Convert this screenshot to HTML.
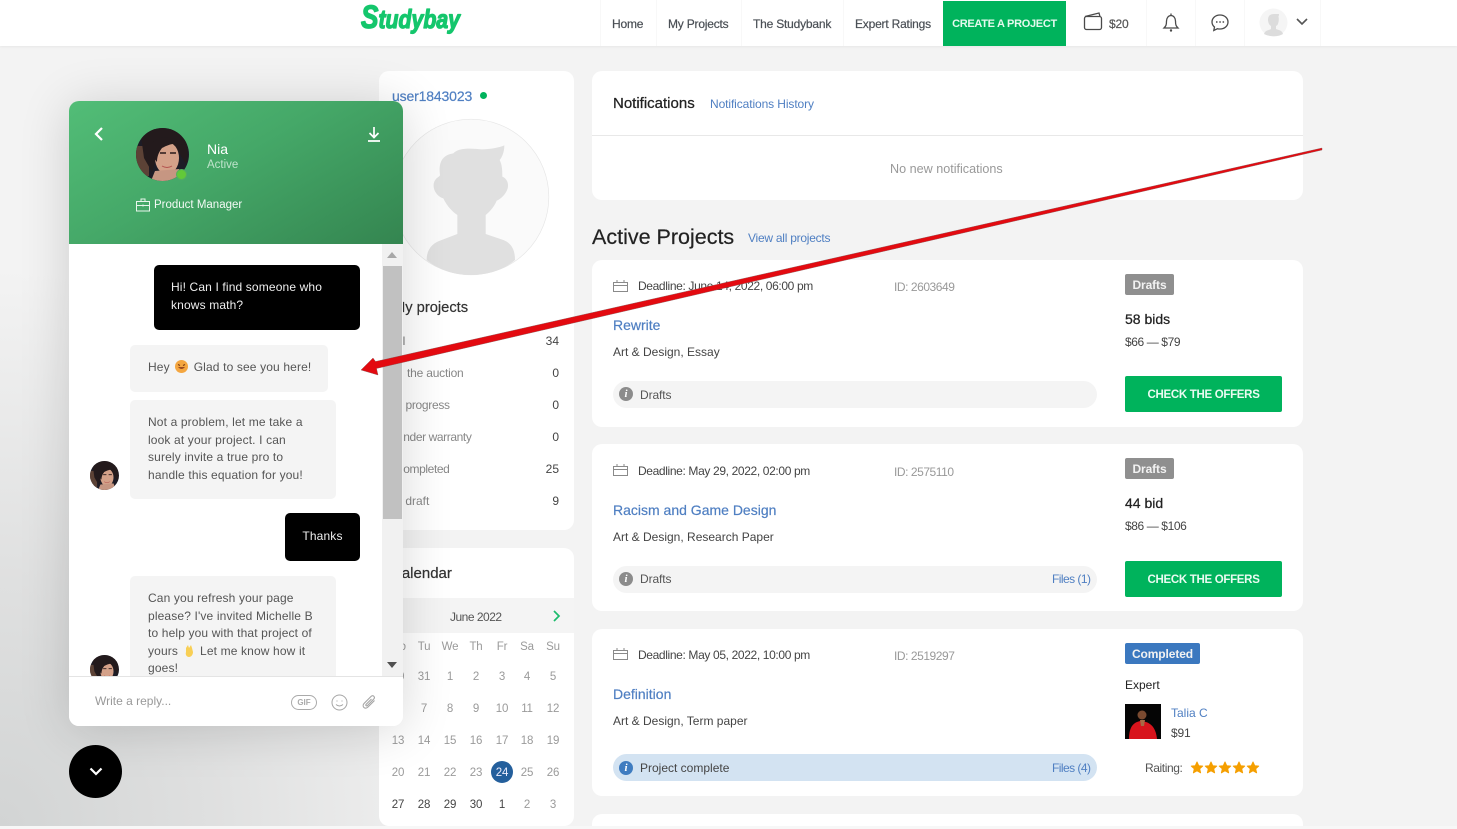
<!DOCTYPE html>
<html style="overflow:hidden;height:829px"><head><meta charset="utf-8"><title>Studybay</title>
<style>
html,body{margin:0;padding:0}
body{width:1457px;height:829px;overflow:hidden;background:#f3f3f3;font-family:"Liberation Sans",sans-serif;font-size:12px;color:#444}
#root{position:absolute;left:0;top:0;width:1457px;height:829px;overflow:hidden;background:#f3f3f3}
.t{position:absolute;white-space:nowrap;line-height:16px}
.box{position:absolute;box-sizing:border-box}
.card{position:absolute;background:#fff;border-radius:10px;box-sizing:border-box}
.blue{color:#4f7fc2}
.nav{font-size:12px;color:#4a4f55;top:16px;letter-spacing:-.2px;-webkit-text-stroke:.2px #4a4f55}
.v{position:absolute;top:0;width:1px;height:46px;background:#f8f8f8}
.btn{position:absolute;left:1125px;width:157px;height:36px;background:#00b35c;border-radius:2px;color:#e9fbf1;font-weight:700;font-size:11.5px;letter-spacing:-.3px;line-height:38px;text-align:center}
.tag{position:absolute;left:1125px;height:21px;line-height:23px;border-radius:2px;color:#f2f2f2;font-weight:700;font-size:12px;letter-spacing:-.1px;text-align:center}
.pill{position:absolute;left:613px;width:484px;height:27px;border-radius:14px;background:#f4f4f4}
.i{position:absolute;width:14px;height:14px;border-radius:50%;background:#8c8c8c;color:#fff;font:italic 700 11px/14px "Liberation Serif",serif;text-align:center}
.bub{position:absolute;box-sizing:border-box;font-size:12px;line-height:17.5px;border-radius:5px;letter-spacing:.14px}
.g{background:#f4f4f4;color:#555;padding:14px 0 0 18px}
.k{background:#000;color:#eee}
.cal{position:absolute;width:26px;text-align:center;line-height:16px;font-size:11.5px;color:#9a9a9a;letter-spacing:-.2px;transform:translateY(1px)}
.d{color:#444}
.dl{letter-spacing:-.36px;color:#444}
.id{letter-spacing:-.45px;color:#999}
.pr{letter-spacing:-.4px;color:#444}
.fl{letter-spacing:-.55px}
.h2{font-size:15px;color:#333;-webkit-text-stroke:.2px #333}
</style></head><body><div id="root">

<!-- ambient shadow of the chat -->
<div class="box" style="left:0;top:46px;width:700px;height:783px;background:radial-gradient(ellipse 480px 560px at 0 100%,#d2d4d4 0,rgba(215,216,216,.7) 45%,rgba(243,243,243,0) 100%)"></div>

<!-- header -->
<div class="box" style="left:0;top:0;width:1457px;height:46px;background:#fff;box-shadow:0 1px 2px rgba(0,0,0,.05)"></div>
<div class="v" style="left:600px"></div><div class="v" style="left:656px"></div><div class="v" style="left:741px"></div><div class="v" style="left:843px"></div><div class="v" style="left:1146px"></div><div class="v" style="left:1195px"></div><div class="v" style="left:1244px"></div><div class="v" style="left:1320px"></div>
<svg class="box" style="left:355px;top:0" width="115" height="40"><text x="6" y="28" font-family="Liberation Sans,sans-serif" font-style="italic" font-weight="700" font-size="26" textLength="99" lengthAdjust="spacingAndGlyphs" fill="#14c66c" stroke="#14c66c" stroke-width="1.300" stroke-linejoin="round"><tspan font-size="32">S</tspan>tudybay</text></svg>
<div class="t nav" style="left:612px">Home</div>
<div class="t nav" style="left:668px">My Projects</div>
<div class="t nav" style="left:753px">The Studybank</div>
<div class="t nav" style="left:855px">Expert Ratings</div>
<div class="box" style="left:943px;top:1px;width:123px;height:45px;background:#00b35c;color:#e4f9ee;font-weight:700;font-size:11px;letter-spacing:-.3px;line-height:46px;text-align:center">CREATE A PROJECT</div>
<svg class="box" style="left:1080px;top:10px" width="26" height="24" fill="none" stroke="#4a4a4a" stroke-width="1.3"><rect x="4.500" y="6.500" width="17" height="13" rx="2"/><path d="M5 6.500 19 3l1 3.500"/></svg>
<div class="t" style="left:1109px;top:16px;color:#555;letter-spacing:-.2px;-webkit-text-stroke:.2px #555">$20</div>
<svg class="box" style="left:1160px;top:11px" width="22" height="22" fill="none" stroke="#4a4a4a" stroke-width="1.3"><path d="M4 17h14c-2-2-2.500-3-2.500-7 0-3-2-5.500-4.500-5.500S6.500 7 6.500 10c0 4-.5 5-2.500 7zM11 2.500v2"/><circle cx="11" cy="19.500" r="1.200" fill="#4a4a4a" stroke="none"/></svg>
<svg class="box" style="left:1209px;top:12px" width="22" height="22" fill="none" stroke="#4a4a4a" stroke-width="1.300"><path d="M11 3c-4.500 0-8 3-8 7 0 2 1 3.800 2.500 5l-.7 3.500 3.700-1.800c.8.200 1.600.300 2.500.300 4.500 0 8-3 8-7s-3.500-7-8-7z"/><path d="M7 10h1.500M10.300 10h1.500M13.600 10h1.500" stroke-width="1.500"/></svg>
<svg class="box" style="left:1259px;top:8px" width="29" height="29" viewBox="0 0 29 29"><circle cx="14.500" cy="14.500" r="14" fill="#f5f5f5"/><path d="M5 26c1-4 6-4 7-5v-3c-2-1-3-4-3-6 0-4 2-6 6-6 2 0 4 0 5 0 0 2-.5 2-.5 3 .5 1 .5 5-1 8l-1.500 1v3c2 1 6 1 7 5-5 3-13 3-19 0z" fill="#dcdcdc"/></svg>
<svg class="box" style="left:1295px;top:17px" width="14" height="10" fill="none" stroke="#555" stroke-width="1.600"><path d="M2 2l5 5 5-5"/></svg>

<!-- sidebar -->
<div class="card" style="left:379px;top:71px;width:195px;height:459px"></div>
<div class="t blue" style="left:392px;top:88px;font-size:14px;letter-spacing:-.15px;-webkit-text-stroke:.2px #4f7fc2">user1843023</div>
<div class="box" style="left:480px;top:92px;width:7px;height:7px;border-radius:50%;background:#00b35c"></div>
<svg class="box" style="left:375px;top:60px" width="210" height="230" viewBox="0 0 630 690"><circle cx="288" cy="411" r="233.500" fill="#fafafa" stroke="#e6e6e6" stroke-width="2"/><path fill="#e0e0e0" d="M155 600C155 565 175 548 200 540L247 522V465C225 450 212 430 205 415 185 410 170 385 178 365 183 352 195 350 195 345 190 310 200 285 235 280 250 262 290 265 320 268 345 268 375 262 388 256 388 275 382 290 374 300 382 315 382 335 382 350 395 355 402 370 398 385 392 405 375 418 365 422 358 440 345 455 332 465V522L385 540C410 550 420 570 420 600 385 630 340 645 285 645 235 645 190 628 155 600Z"/></svg>
<div class="t h2" style="left:393px;top:300px;font-size:14.700px">My projects</div>
<div class="t" style="left:392px;top:333px;color:#777">All</div><div class="t" style="right:898px;top:333px;color:#444">34</div>
<div class="t" style="left:407px;top:365px;color:#888;letter-spacing:-.2px">the auction</div><div class="t" style="right:898px;top:365px;color:#444">0</div>
<div class="t" style="left:393px;top:397px;color:#888;letter-spacing:-.3px">In progress</div><div class="t" style="right:898px;top:397px;color:#444">0</div>
<div class="t" style="left:395px;top:429px;color:#888;letter-spacing:-.4px">Under warranty</div><div class="t" style="right:898px;top:429px;color:#444">0</div>
<div class="t" style="left:395px;top:461px;color:#888;letter-spacing:-.4px">Completed</div><div class="t" style="right:898px;top:461px;color:#444">25</div>
<div class="t" style="left:392px;top:493px;color:#888">In draft</div><div class="t" style="right:898px;top:493px;color:#444">9</div>

<!-- calendar -->
<div class="card" style="left:379px;top:548px;width:195px;height:278px"></div>
<div class="t h2" style="left:391px;top:566px">Calendar</div>
<div class="box" style="left:379px;top:598px;width:195px;height:35px;background:#f4f4f4"></div>
<div class="t" style="left:450px;top:609px;color:#555;letter-spacing:-.5px">June 2022</div>
<svg class="box" style="left:551px;top:609px" width="12" height="14" fill="none" stroke="#1bbb6c" stroke-width="1.700"><path d="M3 2l5 5-5 5"/></svg>
<div class="cal" style="left:385px;top:638px">Mo</div><div class="cal" style="left:411px;top:638px">Tu</div><div class="cal" style="left:437px;top:638px">We</div><div class="cal" style="left:463px;top:638px">Th</div><div class="cal" style="left:489px;top:638px">Fr</div><div class="cal" style="left:514px;top:638px">Sa</div><div class="cal" style="left:540px;top:638px">Su</div>
<div class="cal" style="left:385px;top:668px">30</div><div class="cal" style="left:411px;top:668px">31</div><div class="cal" style="left:437px;top:668px">1</div><div class="cal" style="left:463px;top:668px">2</div><div class="cal" style="left:489px;top:668px">3</div><div class="cal" style="left:514px;top:668px">4</div><div class="cal" style="left:540px;top:668px">5</div>
<div class="cal" style="left:385px;top:700px">6</div><div class="cal" style="left:411px;top:700px">7</div><div class="cal" style="left:437px;top:700px">8</div><div class="cal" style="left:463px;top:700px">9</div><div class="cal" style="left:489px;top:700px">10</div><div class="cal" style="left:514px;top:700px">11</div><div class="cal" style="left:540px;top:700px">12</div>
<div class="cal" style="left:385px;top:732px">13</div><div class="cal" style="left:411px;top:732px">14</div><div class="cal" style="left:437px;top:732px">15</div><div class="cal" style="left:463px;top:732px">16</div><div class="cal" style="left:489px;top:732px">17</div><div class="cal" style="left:514px;top:732px">18</div><div class="cal" style="left:540px;top:732px">19</div>
<div class="cal" style="left:385px;top:764px">20</div><div class="cal" style="left:411px;top:764px">21</div><div class="cal" style="left:437px;top:764px">22</div><div class="cal" style="left:463px;top:764px">23</div>
<div class="box" style="left:491px;top:761px;width:22px;height:22px;border-radius:50%;background:#245f9c"></div>
<div class="cal" style="left:489px;top:764px;color:#eef">24</div><div class="cal" style="left:514px;top:764px">25</div><div class="cal" style="left:540px;top:764px">26</div>
<div class="cal d" style="left:385px;top:796px">27</div><div class="cal d" style="left:411px;top:796px">28</div><div class="cal d" style="left:437px;top:796px">29</div><div class="cal d" style="left:463px;top:796px">30</div><div class="cal d" style="left:489px;top:796px">1</div><div class="cal" style="left:514px;top:796px">2</div><div class="cal" style="left:540px;top:796px">3</div>

<!-- notifications -->
<div class="card" style="left:592px;top:71px;width:711px;height:129px"></div>
<div class="t" style="left:613px;top:96px;font-size:15px;color:#222;-webkit-text-stroke:.25px #222">Notifications</div>
<div class="t blue" style="left:710px;top:96px;letter-spacing:-.1px">Notifications History</div>
<div class="box" style="left:592px;top:135px;width:711px;height:1px;background:#e8e8e8"></div>
<div class="t" style="left:890px;top:161px;font-size:12.600px;color:#999">No new notifications</div>

<div class="t" style="left:592px;top:225px;font-size:21.500px;line-height:24px;color:#222;-webkit-text-stroke:.2px #222">Active Projects</div>
<div class="t blue" style="left:748px;top:230px;letter-spacing:-.25px">View all projects</div>

<!-- project 1 -->
<div class="card" style="left:592px;top:260px;width:711px;height:167px"></div>
<svg class="box" style="left:613px;top:279px" width="15" height="14" fill="none" stroke="#8a8a8a"><path d="M.5 3.500h14v9H.5zM.5 6.500h14M4 1v3M11 1v3"/></svg>
<div class="t dl" style="left:638px;top:278px">Deadline: June 14, 2022, 06:00 pm</div>
<div class="t id" style="left:894px;top:279px">ID: 2603649</div>
<div class="t blue" style="left:613px;top:317px;font-size:14px;-webkit-text-stroke:.2px #4f7fc2">Rewrite</div>
<div class="t" style="left:613px;top:344px;color:#444">Art &amp; Design, Essay</div>
<div class="pill" style="top:381px"></div><div class="i" style="left:619px;top:387px">i</div>
<div class="t" style="left:640px;top:387px;color:#555;letter-spacing:-.1px">Drafts</div>
<div class="tag" style="top:274px;width:49px;background:#8f8f8f">Drafts</div>
<div class="t" style="left:1125px;top:311px;font-size:14px;color:#222;-webkit-text-stroke:.25px #222">58 bids</div>
<div class="t pr" style="left:1125px;top:334px">$66 — $79</div>
<div class="btn" style="top:376px">CHECK THE OFFERS</div>

<!-- project 2 -->
<div class="card" style="left:592px;top:444px;width:711px;height:167px"></div>
<svg class="box" style="left:613px;top:463px" width="15" height="14" fill="none" stroke="#8a8a8a"><path d="M.5 3.500h14v9H.5zM.5 6.500h14M4 1v3M11 1v3"/></svg>
<div class="t dl" style="left:638px;top:463px">Deadline: May 29, 2022, 02:00 pm</div>
<div class="t id" style="left:894px;top:464px">ID: 2575110</div>
<div class="t blue" style="left:613px;top:502px;font-size:14px;-webkit-text-stroke:.2px #4f7fc2">Racism and Game Design</div>
<div class="t" style="left:613px;top:529px;color:#444">Art &amp; Design, Research Paper</div>
<div class="pill" style="top:566px"></div><div class="i" style="left:619px;top:572px">i</div>
<div class="t" style="left:640px;top:571px;color:#555;letter-spacing:-.1px">Drafts</div>
<div class="t blue fl" style="left:1052px;top:571px">Files (1)</div>
<div class="tag" style="top:458px;width:49px;background:#8f8f8f">Drafts</div>
<div class="t" style="left:1125px;top:495px;font-size:14px;color:#222;-webkit-text-stroke:.25px #222">44 bid</div>
<div class="t pr" style="left:1125px;top:518px">$86 — $106</div>
<div class="btn" style="top:561px">CHECK THE OFFERS</div>

<!-- project 3 -->
<div class="card" style="left:592px;top:629px;width:711px;height:167px"></div>
<svg class="box" style="left:613px;top:647px" width="15" height="14" fill="none" stroke="#8a8a8a"><path d="M.5 3.500h14v9H.5zM.5 6.500h14M4 1v3M11 1v3"/></svg>
<div class="t dl" style="left:638px;top:647px">Deadline: May 05, 2022, 10:00 pm</div>
<div class="t id" style="left:894px;top:648px">ID: 2519297</div>
<div class="t blue" style="left:613px;top:686px;font-size:14px;-webkit-text-stroke:.2px #4f7fc2">Definition</div>
<div class="t" style="left:613px;top:713px;color:#444">Art &amp; Design, Term paper</div>
<div class="pill" style="top:754px;background:#d3e3f2"></div><div class="i" style="left:619px;top:761px;background:#3f7cc0">i</div>
<div class="t" style="left:640px;top:760px;color:#444">Project complete</div>
<div class="t blue fl" style="left:1052px;top:760px">Files (4)</div>
<div class="tag" style="top:643px;width:75px;background:#3b78bf">Completed</div>
<div class="t" style="left:1125px;top:677px;color:#222">Expert</div>
<svg class="box" style="left:1125px;top:704px" width="36" height="35"><rect width="36" height="35" fill="#050505"/><path d="M4 35c0-10 3-15 8-17l3-1 6 1c6 2 10 7 11 17z" fill="#d8141c"/><circle cx="17" cy="11" r="4.500" fill="#7a4a30"/><path d="M15 16h5l-1 6h-3z" fill="#a86a45"/></svg>
<div class="t blue" style="left:1171px;top:705px">Talia C</div>
<div class="t" style="left:1171px;top:725px;color:#444;letter-spacing:-.2px">$91</div>
<div class="t" style="left:1145px;top:760px;color:#555;letter-spacing:-.4px">Raiting:</div>
<svg class="box" style="left:1190px;top:760px" width="72" height="16" fill="#f59f00" stroke="#f59f00" stroke-linejoin="round"><path id="s" d="M7 2l1.700 3.700 4 .4-3 2.700.9 4-3.600-2.100-3.600 2.100.9-4-3-2.700 4-.4z"/><use href="#s" x="14"/><use href="#s" x="28"/><use href="#s" x="42"/><use href="#s" x="56"/></svg>

<!-- project 4 stub -->
<div class="card" style="left:592px;top:814px;width:711px;height:15px;border-radius:10px 10px 0 0"></div>
<div class="box" style="left:0;top:826px;width:1457px;height:3px;background:#f7f7f7"></div>

<!-- chat -->
<div class="box" style="left:69px;top:101px;width:334px;height:625px;background:#fff;border-radius:10px;overflow:hidden;box-shadow:0 4px 50px rgba(0,0,0,.16)">
  <div class="box" style="left:0;top:0;width:334px;height:143px;background:linear-gradient(150deg,#52bd77 0,#45a868 45%,#348550 100%)"></div>
  <svg class="box" style="left:23px;top:25px" width="14" height="16" fill="none" stroke="#fff" stroke-width="2.200"><path d="M10 2L4 8l6 6"/></svg>
  <svg class="box" style="left:297px;top:25px" width="16" height="17" fill="none" stroke="#fff" stroke-width="1.700"><path d="M8 1v10M3.500 7L8 11.500 12.500 7M2 15h12"/></svg>
  <svg class="box" style="left:67px;top:27px" width="53" height="53" viewBox="0 0 53 53"><defs><clipPath id="cp"><circle cx="26.500" cy="26.500" r="26.500"/></clipPath><g id="face" clip-path="url(#cp)"><rect width="53" height="53" fill="#1d1c26"/><rect x="0" y="18" width="13" height="30" fill="#5c4236"/><path d="M5 8C15-2 38-3 48 8c4 8 5 20 2 28L40 20 22 24l-6 20L8 30z" fill="#231a1c"/><ellipse cx="31" cy="30" rx="12" ry="16" fill="#d4a189"/><path d="M19 43l24-2 4 12H15z" fill="#c69682"/><path d="M26 38q5 3 10 0-5 3-10 0z" fill="#b3524e" stroke="#b3524e"/><path d="M24 25h6M34 25h6" stroke="#2a1b1b" stroke-width="1.500"/><path d="M16 15c8-8 24-8 30 2-8-3-14 0-20 3-3 4-5 8-5 14l-5-6z" fill="#231a1c"/></g></defs><use href="#face"/></svg>
  <div class="box" style="left:107px;top:68px;width:11px;height:11px;border-radius:50%;background:#62c939;border:1px solid #54ad60"></div>
  <div class="t" style="left:138px;top:40px;font-size:14px;color:#fff">Nia</div>
  <div class="t" style="left:138px;top:56px;font-size:11.500px;color:#bfe3cb">Active</div>
  <svg class="box" style="left:67px;top:97px" width="15" height="14" fill="none" stroke="#e8f5ec"><path d="M.5 3.500h13v9.500H.5zM.5 7.500h13M5 3.500V1h4v2.500M7 6.500v2"/></svg>
  <div class="t" style="left:85px;top:96px;font-size:11.500px;color:#f3faf5">Product Manager</div>

  <div class="box" style="left:313px;top:143px;width:21px;height:432px;background:#f1f1f1"></div>
  <div class="box" style="left:314px;top:165px;width:19px;height:253px;background:#c1c1c1"></div>
  <div class="box" style="left:318px;top:151px;border:5px solid transparent;border-top:0;border-bottom:6px solid #a8a8a8"></div>
  <div class="box" style="left:318px;top:561px;border:5px solid transparent;border-bottom:0;border-top:6px solid #505050"></div>

  <div class="bub k" style="left:85px;top:164px;width:206px;height:65px;padding:14px 0 0 17px">Hi! Can I find someone who<br>knows math?</div>
  <div class="bub g" style="left:61px;top:244px;width:198px;height:47px">Hey <svg width="13" height="13" style="vertical-align:-2px;margin:0 2px"><circle cx="6.500" cy="6.500" r="6.500" fill="#f4a640"/><path d="M3 7q3.500 4 7 0" fill="#9a4a20"/><path d="M3 4.500l2 1M10 4.500l-2 1" stroke="#7a3a10"/></svg> Glad to see you here!</div>
  <div class="bub g" style="left:61px;top:299px;width:206px;height:99px">Not a problem, let me take a<br>look at your project. I can<br>surely invite a true pro to<br>handle this equation for you!</div>
  <svg class="box" style="left:21px;top:360px" width="29" height="29" viewBox="0 0 53 53"><use href="#face"/></svg>
  <div class="bub k" style="left:216px;top:412px;width:75px;height:48px;text-align:center;line-height:46px">Thanks</div>
  <div class="bub g" style="left:61px;top:475px;width:206px;height:125px">Can you refresh your page<br>please? I've invited Michelle B<br>to help you with that project of<br>yours <svg width="11" height="13" style="vertical-align:-2px;margin:0 2px"><path d="M2 4l2-3 1 3 2-3 1 3 1 4c0 3-2 5-4 5s-4-2-3-5z" fill="#f8cf55"/></svg> Let me know how it<br>goes!</div>
  <svg class="box" style="left:21px;top:554px" width="29" height="29" viewBox="0 0 53 53"><use href="#face"/></svg>

  <div class="box" style="left:0;top:575px;width:334px;height:50px;background:#fff;border-top:1px solid #e4e4e4"></div>
  <div class="t" style="left:26px;top:592px;font-size:12px;color:#999">Write a reply...</div>
  <div class="box" style="left:222px;top:594px;width:26px;height:15px;border:1px solid #aaa;border-radius:8px;font:700 8px/13px 'Liberation Sans',sans-serif;color:#aaa;text-align:center">GIF</div>
  <svg class="box" style="left:262px;top:593px" width="17" height="17" fill="none" stroke="#a5a5a5"><circle cx="8.500" cy="8.500" r="7.500"/><path d="M5 10.500q3.500 3 7 0M6 6.500v1M11 6.500v1"/></svg>
  <svg class="box" style="left:292px;top:593px" width="17" height="17" fill="none" stroke="#a5a5a5" stroke-width="1.100"><path d="M13.500 6.500L7 13c-3 3-6.500-.5-4-3.500l7-7c2-2 4.500.5 2.800 2.500L6.500 11.500c-1 1-2.300-.2-1.300-1.300L10.500 5"/></svg>
</div>

<!-- round toggle -->
<div class="box" style="left:69px;top:745px;width:53px;height:53px;border-radius:50%;background:#000"></div>
<svg class="box" style="left:88px;top:766px" width="16" height="12" fill="none" stroke="#fff" stroke-width="2.200"><path d="M2.500 2.500L8 8l5.500-5.500"/></svg>

<!-- red arrow -->
<svg class="box" style="left:0;top:0;pointer-events:none" width="1457" height="829"><polygon points="361,370 373,358 375.500,361.500 1322,148 1322,150 376.500,368.500 378,375" fill="#e30a10" stroke="#8a5050" stroke-width=".4"/></svg>
</div></body></html>
